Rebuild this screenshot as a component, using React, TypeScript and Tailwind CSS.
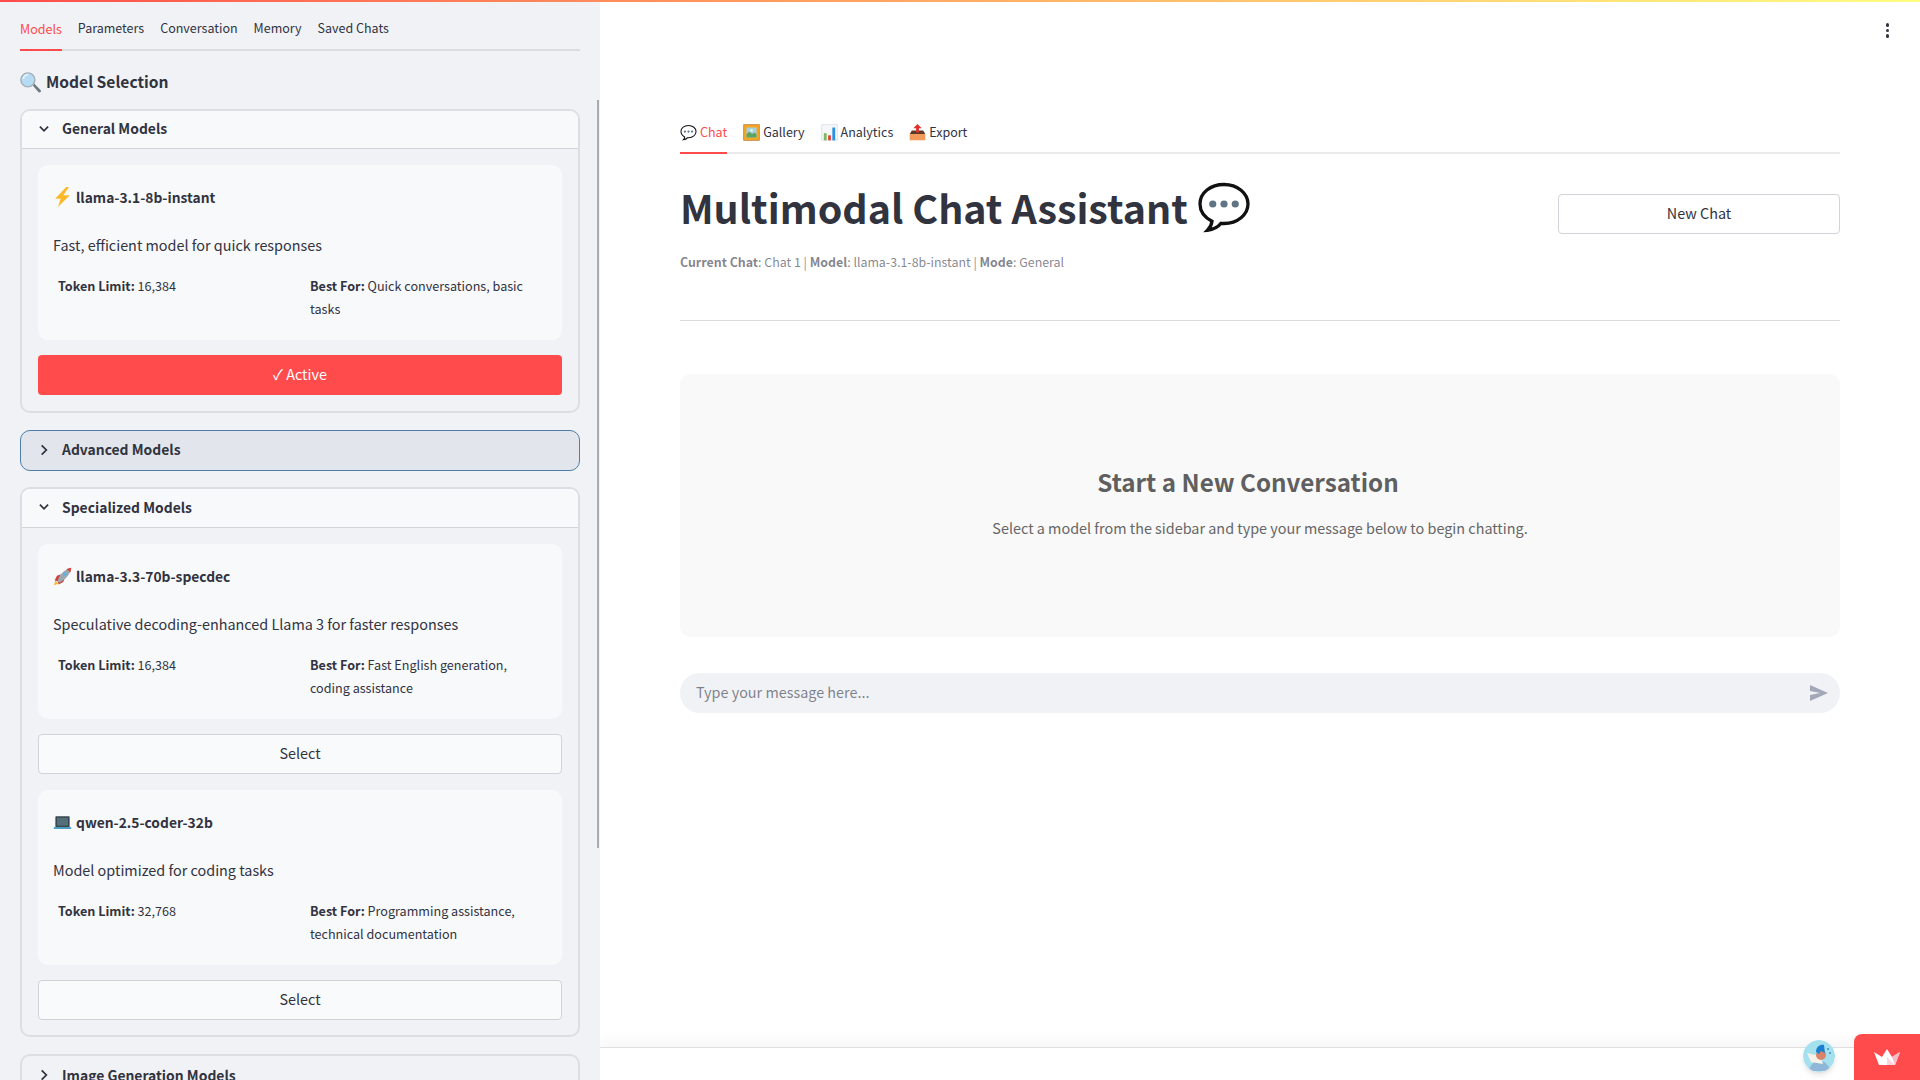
import React from 'react';

function ChevronDown() {
  return (
    <svg width="14" height="14" viewBox="0 0 24 24" fill="none" stroke="#31333f" strokeWidth="3" className="shrink-0">
      <path d="M5 8l7 7 7-7" />
    </svg>
  );
}

function ChevronRight() {
  return (
    <svg width="14" height="14" viewBox="0 0 24 24" fill="none" stroke="#31333f" strokeWidth="3" className="shrink-0">
      <path d="M8 4l8 8-8 8" />
    </svg>
  );
}

function MagnifierIcon() {
  return (
    <svg width="21" height="21" viewBox="0 0 24 24" className="shrink-0">
      <path d="M14.5 15.5l2-2 7 7.2a1.6 1.6 0 0 1-2.2 2.3z" fill="#6f7b83" />
      <circle cx="9" cy="9" r="8" fill="#b5dcf2" stroke="#a4afb5" strokeWidth="1.6" />
      <path d="M4 8a5 5 0 0 1 5-5" stroke="#e6f4fc" strokeWidth="2" fill="none" />
    </svg>
  );
}

function BoltIcon() {
  return (
    <svg width="19" height="22" viewBox="0 0 20 24" className="shrink-0">
      <path d="M14 1L2 14h6L5 23 18 10h-7l6-9z" fill="#fbb829" />
    </svg>
  );
}

function RocketIcon() {
  return (
    <svg width="19" height="21" viewBox="0 0 24 24" className="shrink-0">
      <path d="M5 11l5-2-4 9-4-1z" fill="#c9453c" />
      <path d="M13 19l2-5-9 4 1 4z" fill="#c9453c" />
      <path d="M1 23l2-6 4 4z" fill="#f6b93b" />
      <path d="M6 18C8 10 14 3 23 1c-1 9-8 15-15 19z" fill="#9aa8b2" />
      <path d="M17 2.500L23 1l-1 6z" fill="#d8423a" />
      <circle cx="15" cy="9" r="2.200" fill="#5eb0e5" />
    </svg>
  );
}

function LaptopIcon() {
  return (
    <svg width="19" height="19" viewBox="0 0 24 24" className="shrink-0">
      <rect x="3" y="4" width="18" height="14" rx="1" fill="#37474f" />
      <rect x="5" y="6" width="14" height="10" fill="#546e7a" />
      <rect x="1" y="18" width="22" height="2" fill="#2a8fb5" />
    </svg>
  );
}

function SpeechIcon({ size }: { size: number }) {
  return (
    <svg width={size} height={size} viewBox="0 0 36 36" className="shrink-0">
      <path
        d="M18 3C9 3 2 8.500 2 16c0 5 3.200 9 8 11.500-.3 2.500-1.500 4.500-3 6 3.500-.3 7-2 9-4.600.7.100 1.300.100 2 .100 9 0 16-6 16-13S27 3 18 3z"
        fill="#fff"
        stroke="#111"
        strokeWidth="2.200"
      />
      <circle cx="10.500" cy="16" r="2.400" fill="#5f7585" />
      <circle cx="18" cy="16" r="2.400" fill="#5f7585" />
      <circle cx="25.500" cy="16" r="2.400" fill="#5f7585" />
    </svg>
  );
}

function PictureIcon() {
  return (
    <svg width="17" height="17" viewBox="0 0 24 24" className="shrink-0">
      <rect x="1" y="1" width="22" height="22" fill="#f5a623" stroke="#b9742a" strokeWidth="1" />
      <rect x="5" y="5" width="14" height="14" fill="#9bd3ee" />
      <path d="M5 19v-5l4-3 4 3 3-2 3 2v5z" fill="#5da55f" />
      <circle cx="12" cy="9" r="2" fill="#f5f0c8" />
    </svg>
  );
}

function ChartIcon() {
  return (
    <svg width="17" height="17" viewBox="0 0 24 24" className="shrink-0">
      <rect x="1" y="1" width="22" height="22" fill="#f4f6f8" stroke="#d5dde2" strokeWidth="1" />
      <rect x="4" y="13" width="4" height="10" fill="#7cb862" />
      <rect x="10" y="16" width="4" height="7" fill="#e2453c" />
      <rect x="16" y="5" width="4" height="18" fill="#2e8fe0" />
    </svg>
  );
}

function OutboxIcon() {
  return (
    <svg width="17" height="17" viewBox="0 0 24 24" className="shrink-0">
      <path d="M1 14h22v9H1z" fill="#f19a5c" />
      <path d="M4 9h16l3 5H1z" fill="#5b3a26" />
      <path d="M12 0l6 6h-4v6h-4V6H6z" fill="#e0302c" />
    </svg>
  );
}

function CrownIcon() {
  return (
    <svg width="26" height="16" viewBox="0 0 26 16">
      <path d="M0 3l8 5L13 0l5 8 8-5-5 13H5z" fill="#fff" />
      <path d="M13 8l8 8h-8z" fill="#fbd5dd" />
      <path d="M18 8l8-5-5 13z" fill="#f8b9c6" />
    </svg>
  );
}

function AvatarIcon() {
  return (
    <svg width="32" height="32" viewBox="0 0 32 32" className="rounded-full">
      <circle cx="16" cy="16" r="16" fill="#a5e0ee" />
      <path d="M6 31c1-7 6-10 11-10s9 4 10 10z" fill="#8fb8d8" />
      <path d="M4 13l13 3 3 8-12-2z" fill="#f7f1e8" />
      <circle cx="18" cy="15" r="5" fill="#d9836a" />
      <path d="M13 12c0-6 5-8 8-7l1 8-4-2-2 3z" fill="#1b7fd0" />
      <circle cx="25" cy="9" r="1" fill="#3f8cc4" />
      <circle cx="27" cy="13" r="1" fill="#3f8cc4" />
    </svg>
  );
}

function SendIcon() {
  return (
    <svg width="18" height="16" viewBox="0 0 18 16">
      <path d="M0 0l18 8-18 8V10l10-2L0 6z" fill="#a3a8b8" />
    </svg>
  );
}

interface ModelCardProps {
  icon: React.ReactNode;
  name: string;
  description: string;
  tokens: string;
  bestFor: string;
}

function ModelCard({ icon, name, description, tokens, bestFor }: ModelCardProps) {
  return (
    <div className="h-[175px] shrink-0 rounded-[10px] bg-[#f8f9fb] px-[15px] pt-[14px] text-[#31333f]">
      <div className="flex h-[36px] items-center gap-[4px] text-[13.800px] font-semibold">
        {icon}
        <span>{name}</span>
      </div>
      <p className="mt-[12px] h-[36px] text-[14.400px] leading-[36px]">{description}</p>
      <div className="mt-[11px] flex text-[12.600px] leading-[23px]">
        <div className="w-[257px] pl-[5px]">
          <span className="font-semibold">Token Limit:</span> {tokens}
        </div>
        <div className="flex-1 pr-4">
          <span className="font-semibold">Best For:</span> {bestFor}
        </div>
      </div>
    </div>
  );
}

function SelectButton({ active }: { active?: boolean }) {
  if (active) {
    return (
      <button className="h-[40px] w-full shrink-0 rounded bg-[#ff4b4b] pb-[2px] text-[14.400px] text-white">✓ Active</button>
    );
  }
  return (
    <button className="h-[40px] w-full shrink-0 rounded border border-[#d1d3d8] bg-[#f9fafc] pb-[2px] text-[14.400px] text-[#31333f]">
      Select
    </button>
  );
}

export default function App() {
  return (
    <div className="relative flex h-screen w-full overflow-hidden bg-white font-['Noto_Sans_CJK_JP',sans-serif] text-[#31333f]">
      {/* gradient strip along the top */}
      <div className="absolute inset-x-0 top-0 z-10 h-[2px] bg-gradient-to-r from-[#ff4b4b] to-[#fffd80]" />

      {/* Sidebar */}
      <aside className="relative flex h-full w-[600px] shrink-0 flex-col overflow-hidden bg-[#f0f2f6] px-5">
        <div className="flex h-[51px] shrink-0 items-end gap-4 border-b-2 border-[#dcdde1] text-[12.500px]">
          <div className="-mb-[2px] flex h-[50px] items-center border-b-2 border-[#ff4b4b] pt-[8px] text-[#ff4b4b]">Models</div>
          <div className="flex h-[50px] items-center pt-[8px]">Parameters</div>
          <div className="flex h-[50px] items-center pt-[8px]">Conversation</div>
          <div className="flex h-[50px] items-center pt-[8px]">Memory</div>
          <div className="flex h-[50px] items-center pt-[8px]">Saved Chats</div>
        </div>

        <h3 className="mt-[18px] flex h-[26px] shrink-0 items-center gap-[5px] text-[15.600px] font-semibold">
          <MagnifierIcon />
          Model Selection
        </h3>

        <div className="mt-[14px] shrink-0 rounded-[10px] border-2 border-[#dcdee3]">
          <div className="flex h-[38px] items-center gap-[11px] rounded-t-[8px] border-b border-[#d1d3d8] bg-[#f8f9fb] pb-[2px] pl-[15px] text-[13.900px] font-semibold">
            <ChevronDown />
            General Models
          </div>
          <div className="flex flex-col gap-[15px] px-4 pb-4 pt-4">
            <ModelCard
              icon={<BoltIcon />}
              name="llama-3.1-8b-instant"
              description="Fast, efficient model for quick responses"
              tokens="16,384"
              bestFor="Quick conversations, basic tasks"
            />
            <SelectButton active />
          </div>
        </div>

        <div className="mt-[17px] flex h-[41px] shrink-0 items-center gap-[11px] rounded-[10px] border border-[#4f7da8] bg-[#e2e6ec] pb-[2px] pl-[16px] text-[13.900px] font-semibold">
          <ChevronRight />
          Advanced Models
        </div>

        <div className="mt-[16px] shrink-0 rounded-[10px] border-2 border-[#dcdee3]">
          <div className="flex h-[39px] items-center gap-[11px] rounded-t-[8px] border-b border-[#d1d3d8] bg-[#f8f9fb] pb-[2px] pl-[15px] text-[13.900px] font-semibold">
            <ChevronDown />
            Specialized Models
          </div>
          <div className="flex flex-col gap-[15px] px-4 pb-[15px] pt-4">
            <ModelCard
              icon={<RocketIcon />}
              name="llama-3.3-70b-specdec"
              description="Speculative decoding-enhanced Llama 3 for faster responses"
              tokens="16,384"
              bestFor="Fast English generation, coding assistance"
            />
            <SelectButton />
            <div className="mt-[1px]">
              <ModelCard
                icon={<LaptopIcon />}
                name="qwen-2.5-coder-32b"
                description="Model optimized for coding tasks"
                tokens="32,768"
                bestFor="Programming assistance, technical documentation"
              />
            </div>
            <SelectButton />
          </div>
        </div>

        <div className="mt-[17px] flex h-[42px] shrink-0 items-center gap-[11px] rounded-[10px] border-2 border-[#dcdee3] pl-[15px] text-[13.900px] font-semibold">
          <ChevronRight />
          Image Generation Models
        </div>

        {/* sidebar scrollbar */}
        <div className="absolute right-[1px] top-[100px] h-[748px] w-[2px] bg-[#a8aab0]" />
      </aside>

      {/* Main area */}
      <main className="flex h-full min-w-0 flex-1 flex-col">
        <div className="flex flex-1 flex-col px-20 pt-[112px]">
          <div className="flex h-[42px] items-end gap-4 border-b-2 border-[#eaeaea] text-[12.500px]">
            <div className="-mb-[2px] flex h-[42px] items-center gap-[3px] border-b-2 border-[#ff4b4b] text-[#ff4b4b]">
              <SpeechIcon size={17} />
              Chat
            </div>
            <div className="flex h-[40px] items-center gap-[3px]">
              <PictureIcon />
              Gallery
            </div>
            <div className="flex h-[40px] items-center gap-[3px]">
              <ChartIcon />
              Analytics
            </div>
            <div className="flex h-[40px] items-center gap-[3px]">
              <OutboxIcon />
              Export
            </div>
          </div>

          <div className="mt-[26px] flex items-start justify-between">
            <div>
              <h1 className="flex h-[54px] items-center gap-[9px] text-[39.400px] font-bold">
                Multimodal Chat Assistant
                <SpeechIcon size={54} />
              </h1>
              <p className="mt-[19px] text-[12.400px] text-[#31333f99]">
                <span className="font-semibold">Current Chat</span>: Chat 1 | <span className="font-semibold">Model</span>: llama-3.1-8b-instant | <span className="font-semibold">Mode</span>: General
              </p>
            </div>
            <button className="mt-[14px] h-[40px] w-[282px] rounded border border-[#d1d3d8] bg-white pb-[2px] text-[14.400px]">
              New Chat
            </button>
          </div>

          <hr className="mt-[48px] border-[#d9d9dc]" />

          <div className="mt-[53px] flex h-[263px] flex-col items-center rounded-[10px] bg-[#f9f9f9] pt-[90px]">
            <h2 className="mr-[24px] h-[36px] text-[24.200px] font-semibold leading-[36px] text-[#5f5f5f]">Start a New Conversation</h2>
            <p className="mt-[17px] text-[14.400px] text-[#666666]">
              Select a model from the sidebar and type your message below to begin chatting.
            </p>
          </div>

          <div className="mt-[36px] flex h-[40px] items-center justify-between rounded-[20px] bg-[#f0f2f6] pl-4 pr-[12px] text-[14.400px] text-[#31333f99]">
            <span className="pb-[1px]">Type your message here...</span>
            <SendIcon />
          </div>
        </div>

        <div className="h-[33px] shrink-0 border-t border-[#e0e0e0] bg-white shadow-[0_-8px_12px_rgba(0,0,0,0.03)]" />
      </main>

      {/* dots menu */}
      <div className="absolute right-[31px] top-[23px] flex flex-col gap-[2px]">
        <span className="h-[3.500px] w-[3.500px] rounded-full bg-[#31333f]" />
        <span className="h-[3.500px] w-[3.500px] rounded-full bg-[#31333f]" />
        <span className="h-[3.500px] w-[3.500px] rounded-full bg-[#31333f]" />
      </div>

      {/* avatar and hosted badge */}
      <div className="absolute bottom-[8px] right-[85px] rounded-full shadow-md">
        <AvatarIcon />
      </div>
      <div className="absolute bottom-0 right-0 flex h-[46px] w-[66px] items-center justify-center rounded-tl-lg bg-[#ff4b4b]">
        <CrownIcon />
      </div>
    </div>
  );
}
